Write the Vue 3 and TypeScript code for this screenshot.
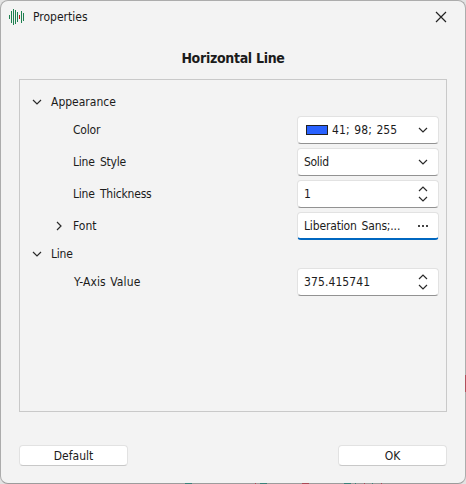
<template>
  <div class="backdrop">
    <div class="dialog">
      <header class="titlebar">
        <svg class="logo" width="16" height="18" viewBox="0 0 16 18">
          <path
            v-for="bar in logoBars"
            :key="bar.x"
            :d="`M${bar.x + 0.5} ${bar.top}V${bar.bottom}`"
            :class="bar.red ? 'bar-red' : 'bar-green'"
          />
        </svg>
        <span class="caption">Properties</span>
        <svg class="close" width="12" height="12" viewBox="0 0 12 12">
          <path d="M1 1L11 11M11 1L1 11" />
        </svg>
      </header>

      <h1 class="heading">Horizontal Line</h1>

      <div class="grid">
        <template v-for="group in groups" :key="group.name">
          <div class="category">
            <svg class="chevron" width="10" height="6" viewBox="0 0 10 6">
              <path d="M1 1L5 5L9 1" />
            </svg>
            <span :class="group.cls">{{ group.name }}</span>
          </div>

          <div v-for="row in group.rows" :key="row.label" class="row">
            <span class="expander">
              <svg v-if="row.kind === 'font'" class="chevron" width="6" height="10" viewBox="0 0 6 10">
                <path d="M1 1L5 5L1 9" />
              </svg>
            </span>
            <span :class="['label', row.cls]">{{ row.label }}</span>
            <div :class="['field', { focused: row.kind === 'font' }]">
              <span v-if="row.swatch" class="swatch"></span>
              <span :class="['value', row.cls + '-value']">{{ row.value }}</span>
              <svg v-if="row.kind === 'combo'" class="chevron" width="10" height="6" viewBox="0 0 10 6">
                <path d="M1 1L5 5L9 1" />
              </svg>
              <svg v-else-if="row.kind === 'spin'" class="chevron" width="10" height="18" viewBox="0 0 10 18">
                <path d="M1 6L5 2L9 6M1 12L5 16L9 12" />
              </svg>
              <svg v-else class="dots" width="10" height="2" viewBox="0 0 10 2">
                <path d="M0 0h2v2h-2zM4 0h2v2h-2zM8 0h2v2h-2z" />
              </svg>
            </div>
          </div>
        </template>
      </div>

      <footer class="actions">
        <button class="btn">Default</button>
        <button class="btn">OK</button>
      </footer>
    </div>

    <!-- slivers of the chart behind the dialog -->
    <svg class="edge-bottom" width="466" height="1" viewBox="0 0 466 1">
      <path class="candle-up" d="M185 0h7v1h-7zM260 0h7v1h-7zM344 0h7v1h-7zM355 0h1v1h-1zM372 0h1v1h-1z" />
      <path class="candle-down" d="M255 0h1v1h-1zM302 0h7v1h-7zM364 0h1v1h-1zM381 0h1v1h-1z" />
    </svg>
    <span class="edge-right"></span>
  </div>
</template>

<script setup lang="ts">
interface Row {
  label: string
  value: string
  kind: 'combo' | 'spin' | 'font'
  cls: string
  swatch?: boolean
}

interface Group {
  name: string
  cls: string
  rows: Row[]
}

const groups: Group[] = [
  {
    name: 'Appearance',
    cls: 'appearance',
    rows: [
      { label: 'Color', value: '41; 98; 255', kind: 'combo', cls: 'color', swatch: true },
      { label: 'Line Style', value: 'Solid', kind: 'combo', cls: 'style' },
      { label: 'Line Thickness', value: '1', kind: 'spin', cls: 'thickness' },
      { label: 'Font', value: 'Liberation Sans;...', kind: 'font', cls: 'font' },
    ],
  },
  {
    name: 'Line',
    cls: 'line',
    rows: [{ label: 'Y-Axis Value', value: '375.415741', kind: 'spin', cls: 'axis' }],
  },
]

// waveform bars of the app icon
const logoBars = [
  { x: 0, top: 7, bottom: 11 },
  { x: 2, top: 3, bottom: 15 },
  { x: 4, top: 1, bottom: 17 },
  { x: 6, top: 2, bottom: 16 },
  { x: 8, top: 4, bottom: 14 },
  { x: 10, top: 7, bottom: 11, red: true },
  { x: 12, top: 3, bottom: 15 },
  { x: 14, top: 5, bottom: 13 },
]
</script>

<style>
body {
  background: #e3e3e3;
  overflow: hidden;
}
</style>

<style scoped>
.backdrop {
  position: relative;
  height: 484px;
  background: #e3e3e3;
}

.dialog {
  box-sizing: border-box;
  display: flex;
  flex-direction: column;
  height: 484px;
  border: 1px solid #acacac;
  border-bottom-color: #9c9c9c;
  border-radius: 8px;
  background: #f3f3f3;
  color: #1b1b1b;
  font: 12px/16px "DejaVu Sans Condensed", "DejaVu Sans", sans-serif;
  font-stretch: condensed;
  white-space: nowrap;
}

.titlebar {
  display: flex;
  align-items: center;
  height: 32px;
  padding: 0 18px 0 8px;
}

.logo path {
  stroke-width: 1;
}

.logo .bar-green {
  stroke: #1f8050;
}

.logo .bar-red {
  stroke: #b01818;
}

.caption {
  margin-left: 8px;
  flex: 1;
}

.close path {
  fill: none;
  stroke: #222;
  stroke-width: 1.2;
}

.heading {
  margin: 16px 0 0;
  font-size: 14px;
  line-height: 18px;
  font-weight: bold;
  letter-spacing: -0.3px;
  text-align: center;
}

.grid {
  box-sizing: border-box;
  height: 333px;
  margin: 12px 18px 0;
  padding: 10px 7px 0 12px;
  border: 1px solid #c9c9c9;
}

.category {
  display: flex;
  align-items: center;
  gap: 9px;
  height: 24px;
}

.line {
  letter-spacing: -0.2px;
}

.chevron path {
  fill: none;
  stroke: #2a2a2a;
  stroke-width: 1.2;
}

.row {
  display: flex;
  align-items: center;
  height: 32px;
}

.expander {
  display: flex;
  width: 17px;
  padding-left: 24px;
}

.label {
  flex: 1;
}

.color {
  letter-spacing: -0.2px;
}

.style,
.thickness {
  letter-spacing: -0.2px;
  word-spacing: 2px;
}

.axis {
  padding-left: 1px;
  letter-spacing: 0.1px;
  word-spacing: 1px;
}

.field {
  box-sizing: border-box;
  display: flex;
  align-items: center;
  width: 142px;
  height: 28px;
  padding: 0 10px 0 6px;
  border: 1px solid #e2e2e2;
  border-bottom-color: #929292;
  border-radius: 4px;
  background: #fff;
}

.focused {
  border-bottom: 2px solid #0067c0;
}

.swatch {
  box-sizing: border-box;
  width: 22px;
  height: 10px;
  margin: 0 4px 0 2px;
  border: 1px solid #222;
  background: #2962ff;
}

.value {
  flex: 1;
}

.color-value {
  letter-spacing: 0.1px;
  word-spacing: 1px;
}

.style-value {
  letter-spacing: -0.3px;
}

.font-value {
  letter-spacing: -0.15px;
  word-spacing: 1.5px;
}

.axis-value {
  letter-spacing: 0.1px;
}

.dots {
  fill: #444;
}

.actions {
  display: flex;
  justify-content: space-between;
  margin: 33px 18px 0;
}

.btn {
  box-sizing: border-box;
  width: 109px;
  height: 21px;
  padding: 0;
  border: 1px solid #e2e2e2;
  border-bottom-color: #c8c8c8;
  border-radius: 4px;
  background: #fff;
  color: inherit;
  font: inherit;
}

.edge-bottom {
  position: absolute;
  left: 0;
  bottom: 0;
}

.candle-up {
  fill: #3a8078;
}

.candle-down {
  fill: #a84a56;
}

.edge-right {
  position: absolute;
  right: 0;
  top: 375px;
  width: 1px;
  height: 17px;
  background: #b0505c;
}
</style>
